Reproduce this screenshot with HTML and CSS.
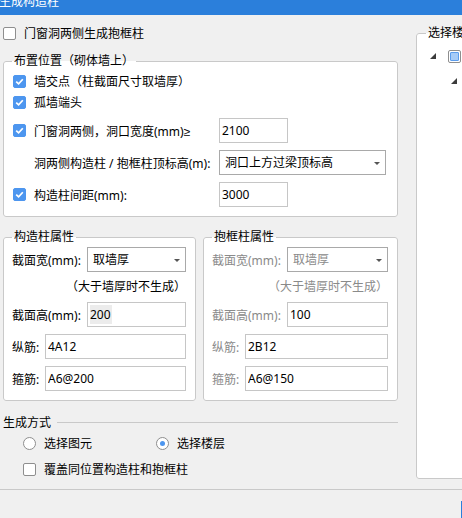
FILE: index.html
```html
<!DOCTYPE html>
<html lang="zh-CN">
<head>
    <meta charset="UTF-8">
    <title>生成构造柱</title>
    <link rel="stylesheet" href="styles.css">
</head>
<body>
    <div class="titlebar">生成构造柱</div>

    <div class="main">
        <div class="left">
            <div class="check top-check">
                <span class="box"></span>
                <span>门窗洞两侧生成抱框柱</span>
            </div>

            <fieldset class="group place">
                <legend>布置位置（砌体墙上）</legend>
                <div class="opt-row">
                    <span class="box on"><svg width="11" height="11" viewBox="0 0 11 11"><path d="M2.2 5.6 L4.6 7.9 L8.8 3.2" fill="none" stroke="#fff" stroke-width="1.7"/></svg></span>
                    <span class="opt-text">墙交点（柱截面尺寸取墙厚）</span>
                </div>
                <div class="opt-row">
                    <span class="box on"><svg width="11" height="11" viewBox="0 0 11 11"><path d="M2.2 5.6 L4.6 7.9 L8.8 3.2" fill="none" stroke="#fff" stroke-width="1.7"/></svg></span>
                    <span class="opt-text">孤墙端头</span>
                </div>
                <div class="opt-row tall">
                    <span class="box on"><svg width="11" height="11" viewBox="0 0 11 11"><path d="M2.2 5.6 L4.6 7.9 L8.8 3.2" fill="none" stroke="#fff" stroke-width="1.7"/></svg></span>
                    <span class="opt-text">门窗洞两侧，洞口宽度(mm)<span class="ge">≥</span></span>
                    <input class="field short" type="text" value="2100">
                </div>
                <div class="opt-row tall indent">
                    <span class="opt-text">洞两侧构造柱 / 抱框柱顶标高(m):</span>
                    <div class="select long"><span>洞口上方过梁顶标高</span></div>
                </div>
                <div class="opt-row tall">
                    <span class="box on"><svg width="11" height="11" viewBox="0 0 11 11"><path d="M2.2 5.6 L4.6 7.9 L8.8 3.2" fill="none" stroke="#fff" stroke-width="1.7"/></svg></span>
                    <span class="opt-text">构造柱间距(mm):</span>
                    <input class="field short" type="text" value="3000">
                </div>
            </fieldset>

            <div class="props">
                <fieldset class="group prop gz">
                    <legend>构造柱属性</legend>
                    <div class="prop-row first">
                        <span class="plabel">截面宽(mm):</span>
                        <div class="select"><span>取墙厚</span></div>
                    </div>
                    <div class="note">（大于墙厚时不生成）</div>
                    <div class="prop-row">
                        <span class="plabel">截面高(mm):</span>
                        <input class="field hl" type="text" value="200">
                    </div>
                    <div class="prop-row">
                        <span class="plabel short">纵筋:</span>
                        <input class="field" type="text" value="4A12">
                    </div>
                    <div class="prop-row">
                        <span class="plabel short">箍筋:</span>
                        <input class="field" type="text" value="A6@200">
                    </div>
                </fieldset>

                <fieldset class="group prop bk disabled">
                    <legend>抱框柱属性</legend>
                    <div class="prop-row first">
                        <span class="plabel">截面宽(mm):</span>
                        <div class="select"><span>取墙厚</span></div>
                    </div>
                    <div class="note">（大于墙厚时不生成）</div>
                    <div class="prop-row">
                        <span class="plabel">截面高(mm):</span>
                        <input class="field" type="text" value="100">
                    </div>
                    <div class="prop-row">
                        <span class="plabel short">纵筋:</span>
                        <input class="field" type="text" value="2B12">
                    </div>
                    <div class="prop-row">
                        <span class="plabel short">箍筋:</span>
                        <input class="field" type="text" value="A6@150">
                    </div>
                </fieldset>
            </div>

            <div class="mode-head">
                <span>生成方式</span>
                <div class="rule"></div>
            </div>
            <div class="radio-row">
                <div class="radio-item"><span class="radio"></span><span>选择图元</span></div>
                <div class="radio-item"><span class="radio on"></span><span>选择楼层</span></div>
            </div>
            <div class="check mode-check">
                <span class="box"></span>
                <span>覆盖同位置构造柱和抱框柱</span>
            </div>
        </div>

        <fieldset class="group floors">
            <legend>选择楼层</legend>
            <div class="tree-row">
                <span class="expander"></span>
                <span class="tree-box"></span>
            </div>
            <div class="tree-row sub">
                <span class="expander"></span>
            </div>
        </fieldset>
    </div>

    <div class="footer">
        <button class="ok">确定</button>
    </div>
</body>
</html>
```

FILE: styles.css
```css
html, body {
    margin: 0;
    overflow: hidden;
}
body {
    width: 462px;
    height: 518px;
    background-color: #f0f0f0;
    font-family: "Noto Sans", "Noto Sans CJK SC", sans-serif;
    font-size: 12px;
    color: #000;
}
.titlebar {
    height: 15px;
    background-color: #2b7fdb;
    color: #fff;
    line-height: 3px;
    overflow: hidden;
    margin-left: -1px;
}
.main {
    display: flex;
    gap: 18px;
    width: 620px;
    padding: 8px 0 0 3px;
}
.left {
    width: 395px;
    flex: none;
}

/* checkboxes */
.check {
    display: flex;
    align-items: center;
    gap: 8px;
    height: 20px;
    white-space: nowrap;
}
.box {
    width: 13px;
    height: 13px;
    box-sizing: border-box;
    border: 1px solid #8e8e8e;
    border-radius: 2px;
    background-color: #fff;
    flex: none;
    display: flex;
    align-items: center;
    justify-content: center;
}
.box.on {
    background-color: #4d96ef;
    border-color: #4d96ef;
}

/* group boxes */
.group {
    margin: 0;
    border: 1px solid #c9c9c9;
    border-radius: 3px;
    background-color: #fff;
    min-width: 0;
    box-sizing: border-box;
}
.group legend {
    padding: 0 2px;
    line-height: 16px;
}
.place {
    margin-top: 10px;
    padding: 1px 9px 9px 9px;
}
.place legend {
    margin-left: -1px;
}
.opt-row {
    display: flex;
    align-items: center;
    height: 20px;
    margin-top: 1px;
    white-space: nowrap;
}
.opt-row.tall {
    height: 25px;
    margin-top: 7px;
}
.opt-row.tall:nth-of-type(3) {
    margin-top: 6px;
}
.opt-row .box {
    margin-right: 8px;
}
.opt-row.indent {
    padding-left: 21px;
}
.opt-text {
    width: 185px;
    flex: none;
}
.ge {
    font-family: "Liberation Sans", sans-serif;
}

/* inputs */
.field {
    height: 25px;
    box-sizing: border-box;
    border: 1px solid #c6c6c6;
    padding: 0 2px;
    margin: 0;
    font: inherit;
    color: #000;
    background-color: #fff;
    outline: none;
    flex: 1;
    min-width: 0;
}
.field.short {
    flex: none;
    width: 69px;
}
.field.hl {
    background: linear-gradient(#ececec, #ececec) no-repeat 2px 2px / 22px 19px, #fff;
}
.select {
    position: relative;
    height: 25px;
    box-sizing: border-box;
    border: 1px solid #a9a9a9;
    background-color: #fff;
    padding-left: 5px;
    line-height: 23px;
    flex: 1;
    min-width: 0;
}
.select.long {
    flex: none;
    width: 167px;
}
.select::after {
    content: "";
    position: absolute;
    right: 5px;
    top: 11px;
    border-left: 3px solid transparent;
    border-right: 3px solid transparent;
    border-top: 3px solid #555;
}

/* column properties */
.props {
    display: flex;
    gap: 7px;
    margin-top: 12px;
}
.prop {
    padding: 0 9px 9px 8px;
}
.gz {
    width: 193px;
}
.bk {
    width: 195px;
}
.prop-row {
    display: flex;
    align-items: center;
    height: 25px;
    margin-top: 7px;
    white-space: nowrap;
}
.prop-row.first {
    margin-top: 2px;
}
.plabel {
    width: 75px;
    flex: none;
}
.plabel.short {
    width: 33px;
}
.note {
    height: 30px;
    line-height: 30px;
    margin-bottom: -7px;
    text-align: right;
    white-space: nowrap;
}
.disabled .plabel,
.disabled .note,
.disabled .select {
    color: #8a8a8a;
}

/* generation mode */
.mode-head {
    display: flex;
    align-items: center;
    height: 18px;
    margin-top: 12px;
}
.rule {
    flex: 1;
    margin-left: 6px;
    border-top: 1px solid #c9c9c9;
}
.radio-row {
    display: flex;
    align-items: center;
    height: 18px;
    margin-top: 3px;
    padding-left: 20px;
}
.radio-item {
    display: flex;
    align-items: center;
    gap: 8px;
    width: 133px;
}
.radio {
    width: 13px;
    height: 13px;
    box-sizing: border-box;
    border: 1px solid #8e8e8e;
    border-radius: 50%;
    background-color: #fff;
    display: flex;
    align-items: center;
    justify-content: center;
}
.radio.on::after {
    content: "";
    width: 5px;
    height: 5px;
    border-radius: 50%;
    background-color: #4d96ef;
}
.mode-check {
    height: 18px;
    margin-top: 8px;
    padding-left: 20px;
}

/* floor tree */
.floors {
    flex: none;
    width: 160px;
    height: 454px;
    margin-top: 2px;
    padding: 0 0 0 9px;
}
.floors legend {
    white-space: nowrap;
}
.tree-row {
    display: flex;
    align-items: center;
    height: 20px;
    margin-top: 5px;
    padding-left: 4px;
}
.tree-row.sub {
    padding-left: 25px;
}
.expander {
    width: 0;
    height: 0;
    border-left: 6px solid transparent;
    border-bottom: 6px solid #3c3c3c;
    margin-right: 12px;
}
.tree-box {
    position: relative;
    width: 13px;
    height: 13px;
    box-sizing: border-box;
    border: 1px solid #8e8e8e;
    border-radius: 2px;
    background-color: #fff;
}
.tree-box::after {
    content: "";
    position: absolute;
    inset: 1px;
    border: 1px solid #5b9cec;
    border-radius: 1px;
    background-color: #a6cbf7;
}

/* bottom bar */
.footer {
    margin-top: 10px;
    border-top: 1px solid #c9c9c9;
    padding-top: 11px;
    display: flex;
}
.ok {
    flex: none;
    margin-left: 461px;
    width: 80px;
    height: 26px;
    border: 1px solid #2b7fdb;
    background-color: #e5f1fb;
    font: inherit;
}
```
